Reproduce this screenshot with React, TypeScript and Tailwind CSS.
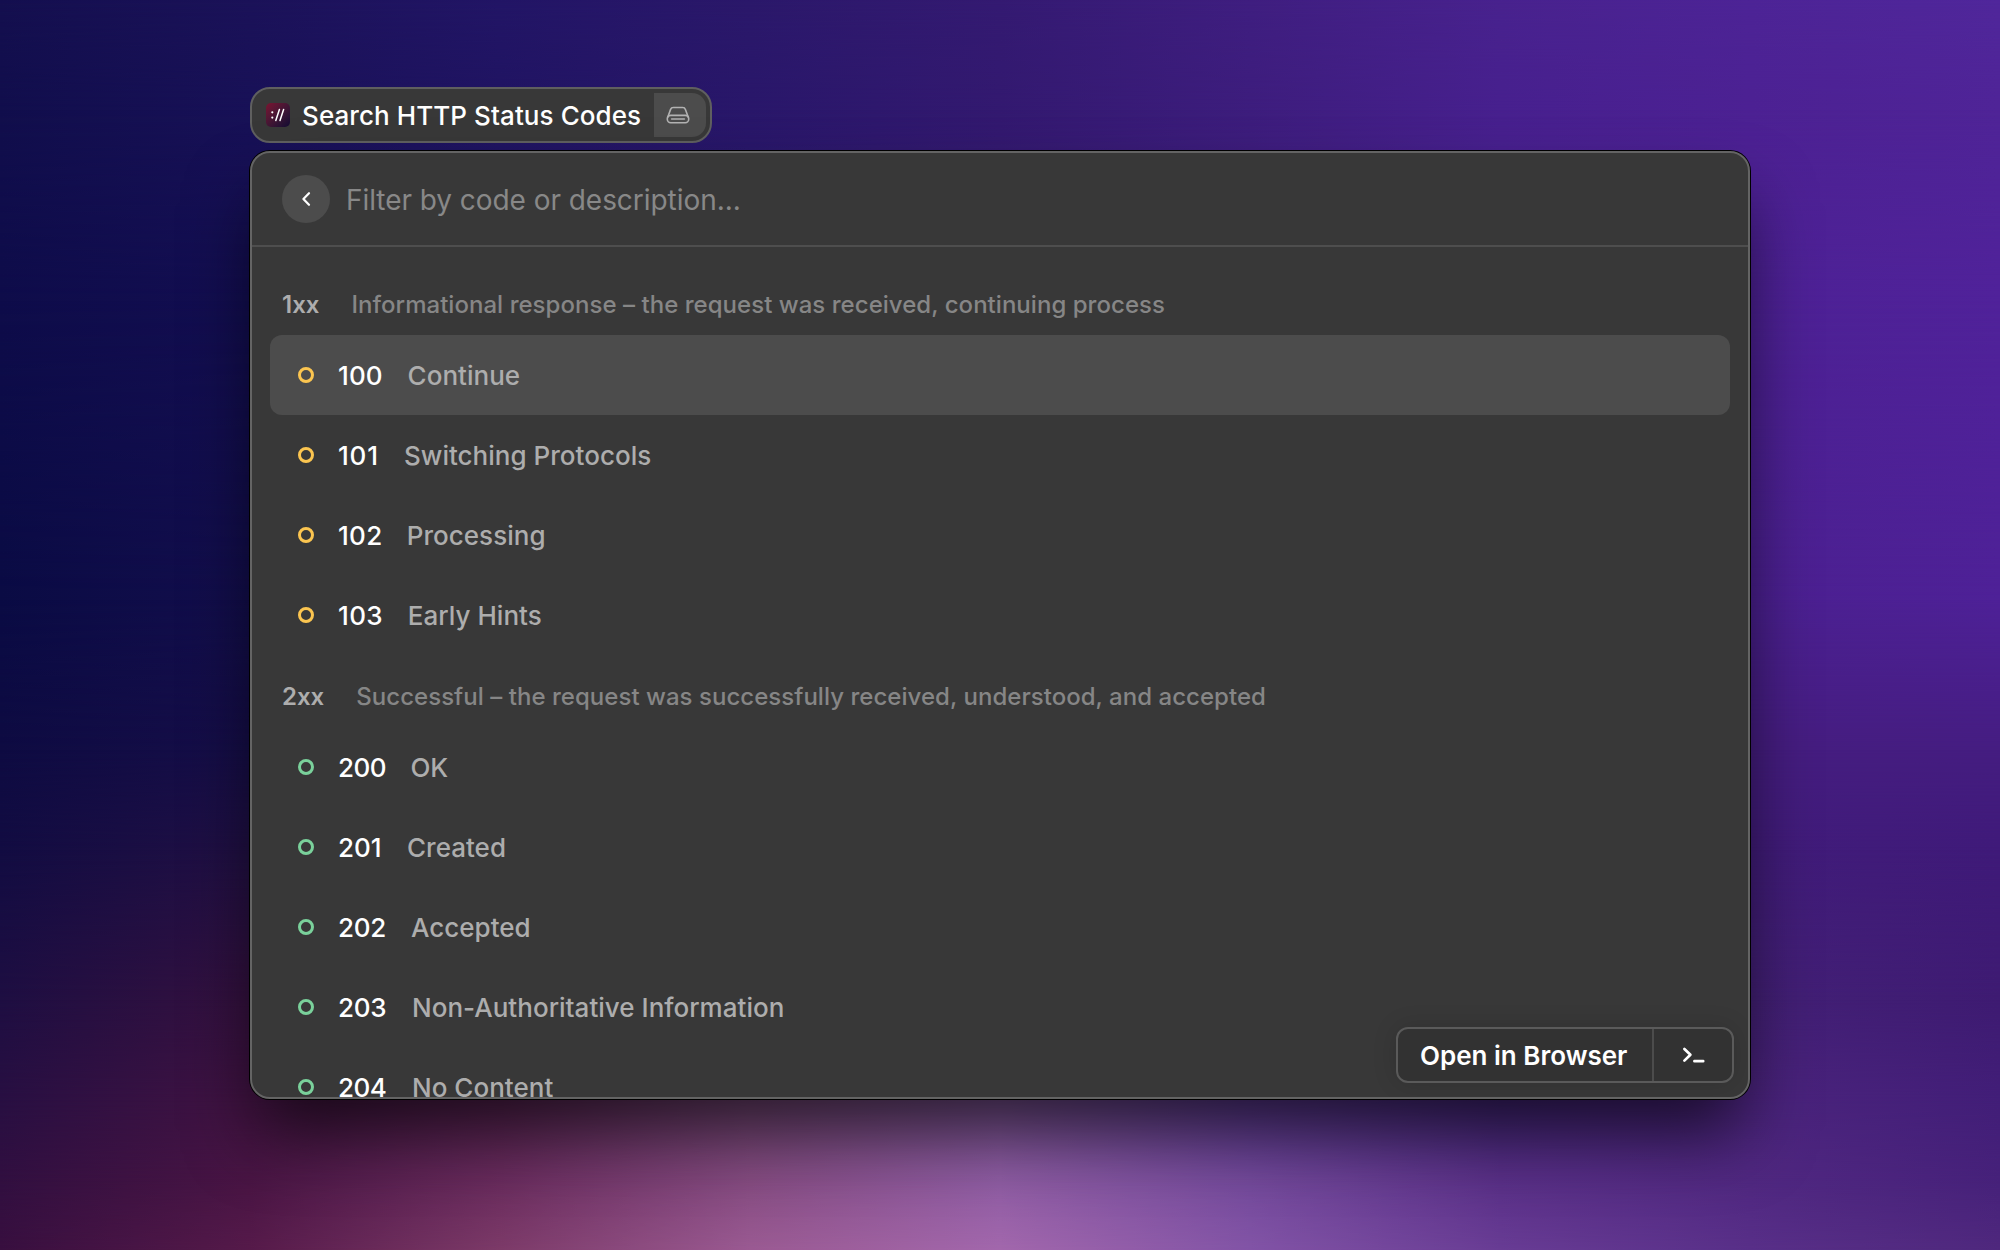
import React from "react";

type Item = { code: string; label: string; width: number; tracking: number };
type Section = { title: string; description: string; tone: "info" | "success"; items: Item[] };

const sections: Section[] = [
  {
    title: "1xx",
    description: "Informational response – the request was received, continuing process",
    tone: "info",
    items: [
      { code: "100", label: "Continue", width: 45.6, tracking: 0.1 },
      { code: "101", label: "Switching Protocols", width: 42, tracking: 0.8 },
      { code: "102", label: "Processing", width: 44.8, tracking: 0.3 },
      { code: "103", label: "Early Hints", width: 45.8, tracking: 0.4 },
    ],
  },
  {
    title: "2xx",
    description: "Successful – the request was successfully received, understood, and accepted",
    tone: "success",
    items: [
      { code: "200", label: "OK", width: 48.4, tracking: -0.5 },
      { code: "201", label: "Created", width: 45, tracking: 0 },
      { code: "202", label: "Accepted", width: 49, tracking: -0.3 },
      { code: "203", label: "Non-Authoritative Information", width: 50, tracking: -0.3 },
      { code: "204", label: "No Content", width: 50, tracking: -0.5 },
    ],
  },
];

// Wallpaper colour mesh: each row lists colours left to right at height y.
const mesh: { y: number; colors: string[] }[] = [
  { y: 0, colors: ["#140f4f", "#1b1259", "#221566", "#2b186b", "#341a72", "#3f1e80", "#48228e", "#4d2496", "#50279b"] },
  { y: 110, colors: ["#110e4c", "#181157", "#201462", "#29176a", "#331970", "#3d1d7d", "#47208e", "#4c2193", "#4f2497"] },
  { y: 300, colors: ["#0e0c4a", "#130e51", "#201462", "#2a176a", "#34196e", "#3f1d7c", "#4a2190", "#4d2195", "#50229a"] },
  { y: 600, colors: ["#0a0b44", "#130e4c", "#201462", "#2a176a", "#34196e", "#3f1d7c", "#4a2190", "#4b2090", "#4e2197"] },
  { y: 750, colors: ["#0e0b42", "#160e48", "#201462", "#2a176a", "#34196e", "#3f1d7c", "#451e82", "#451d80", "#451d81"] },
  { y: 850, colors: ["#120c42", "#211044", "#301458", "#3a176a", "#44196e", "#3f1d7c", "#411d79", "#411c7a", "#3f1a79"] },
  { y: 1000, colors: ["#1e0e42", "#35113f", "#50205a", "#64407a", "#705090", "#503088", "#42247c", "#432076", "#3e1b72"] },
  { y: 1100, colors: ["#280f42", "#411342", "#5c2556", "#7a4a7c", "#80569a", "#603c98", "#482882", "#4b247d", "#421e78"] },
  { y: 1180, colors: ["#310f40", "#491544", "#6a2c5e", "#864c82", "#8f5da4", "#744a9c", "#5a3088", "#502881", "#46217a"] },
  { y: 1250, colors: ["#380f3f", "#561a4a", "#7c3a68", "#9a5a92", "#a267ac", "#8254a6", "#683c94", "#582f88", "#4f287d"] },
];

function Wallpaper() {
  return (
    <div className="absolute inset-0">
      {mesh.map((row, i) => {
        const fade = i === 0 ? undefined : `linear-gradient(to bottom, transparent ${mesh[i - 1].y}px, black ${row.y}px)`;
        return (
          <div
            key={row.y}
            className="absolute inset-0"
            style={{ backgroundImage: `linear-gradient(to right, ${row.colors.join(", ")})`, maskImage: fade }}
          />
        );
      })}
    </div>
  );
}

function AppIcon() {
  return (
    <div className="flex size-6 shrink-0 items-center justify-center rounded-[5px] bg-linear-to-br from-[#7a1230] to-[#130a33]">
      <svg viewBox="0 0 24 24" className="size-6" fill="none" stroke="white" strokeWidth="1.5" strokeLinecap="round">
        <circle cx="6.3" cy="9.3" r="1.1" fill="white" stroke="none" />
        <circle cx="6.3" cy="14.6" r="1.1" fill="white" stroke="none" />
        <path d="M9.8 17.6 13.4 6.4M14 17.6 17.6 6.4" />
      </svg>
    </div>
  );
}

function DriveIcon() {
  return (
    <svg viewBox="0 0 24 18" className="h-[18px] w-6" fill="none" stroke="#b2b2b2" strokeWidth="1.6" strokeLinecap="round" strokeLinejoin="round">
      <path d="M1.7 11.2 4.6 3.4C5.1 2 6 1.5 7.3 1.5h9.4c1.3 0 2.2.5 2.7 1.9l2.9 7.8" />
      <rect x="1.3" y="9.4" width="21.4" height="7.3" rx="3.4" />
      <path d="M5.6 13h12.8" />
    </svg>
  );
}

function ListRow({ item, tone, selected }: { item: Item; tone: Section["tone"]; selected: boolean }) {
  return (
    <div className={`flex h-20 shrink-0 items-center rounded-xl pl-7 text-[26px] font-medium whitespace-nowrap ${selected ? "bg-[#4c4c4c]" : ""}`}>
      <span className={`size-4 rounded-full border-3 ${tone === "info" ? "border-[#fbc550]" : "border-[#7ad19b]"}`} />
      <span className="ml-6 text-white" style={{ width: item.width, letterSpacing: item.tracking }}>
        {item.code}
      </span>
      <span className="ml-6 tracking-[0.02px] text-[#adadad]">{item.label}</span>
    </div>
  );
}

export default function App() {
  return (
    <div className="relative h-[1250px] w-[2000px] overflow-hidden font-[Inter,sans-serif]">
      <Wallpaper />
      <div className="relative flex flex-col items-start gap-2 pt-[87px] pl-[250px]">
        <div className="flex h-14 w-[462px] items-center rounded-[20px] border-2 border-[#5f5f5f] bg-[#383838] pr-1 pl-3.5">
          <AppIcon />
          <span className="ml-3 text-[26px] font-medium tracking-[0.08px] whitespace-nowrap text-white">Search HTTP Status Codes</span>
          <div className="ml-auto flex h-11 w-[52px] items-center justify-center rounded-r-[14px] bg-[#4c4c4c] pr-1">
            <DriveIcon />
          </div>
        </div>

        <div className="relative flex h-[948px] w-[1500px] flex-col overflow-hidden rounded-[20px] border-2 border-[#646464] bg-[#383838] shadow-[0_0_0_1px_#000,0_42px_70px_-8px_rgba(0,0,0,0.66)]">
          <div className="flex h-[94px] shrink-0 items-center border-b-2 border-[#4e4e4e] pl-[30px]">
            <button className="flex size-12 items-center justify-center rounded-full bg-[#4c4c4c]">
              <svg viewBox="0 0 10 16" className="h-4 w-2.5" fill="none" stroke="white" strokeWidth="2.2" strokeLinecap="round" strokeLinejoin="round">
                <path d="M8 2.2 2.4 8 8 13.8" />
              </svg>
            </button>
            <span className="ml-4 pt-0.5 text-[28px] tracking-[-0.05px] text-[#888888]">Filter by code or description...</span>
          </div>

          <div className="flex flex-col px-[18px] pt-4">
            {sections.map((section, s) => (
              <div key={section.title} className="flex flex-col">
                <div className="flex h-[72px] items-center pt-3 pl-3 text-2xl whitespace-nowrap">
                  <span className="font-semibold text-[#adadad]">{section.title}</span>
                  <span className="ml-8 font-medium tracking-[0.035px] text-[#868686]">{section.description}</span>
                </div>
                {section.items.map((item, i) => (
                  <ListRow key={item.code} item={item} tone={section.tone} selected={s === 0 && i === 0} />
                ))}
              </div>
            ))}
          </div>

          <div className="absolute right-3.5 bottom-3.5 flex h-14 rounded-xl border-2 border-[#5a5a5a] bg-[#323232] shadow-[0_0_24px_rgba(0,0,0,0.14)]">
            <div className="flex w-[254px] items-center pl-[22px] text-[26px] font-semibold whitespace-nowrap text-white">Open in Browser</div>
            <div className="flex w-20 items-center justify-center border-l-2 border-[#4c4c4c]">
              <svg viewBox="0 0 24 18" className="h-[18px] w-6" fill="none" stroke="white" strokeWidth="2.7" strokeLinecap="round" strokeLinejoin="round">
                <path d="M3.4 3l6 5.8-6 5.8M13.4 15.2h8.8" />
              </svg>
            </div>
          </div>
        </div>
      </div>
    </div>
  );
}
